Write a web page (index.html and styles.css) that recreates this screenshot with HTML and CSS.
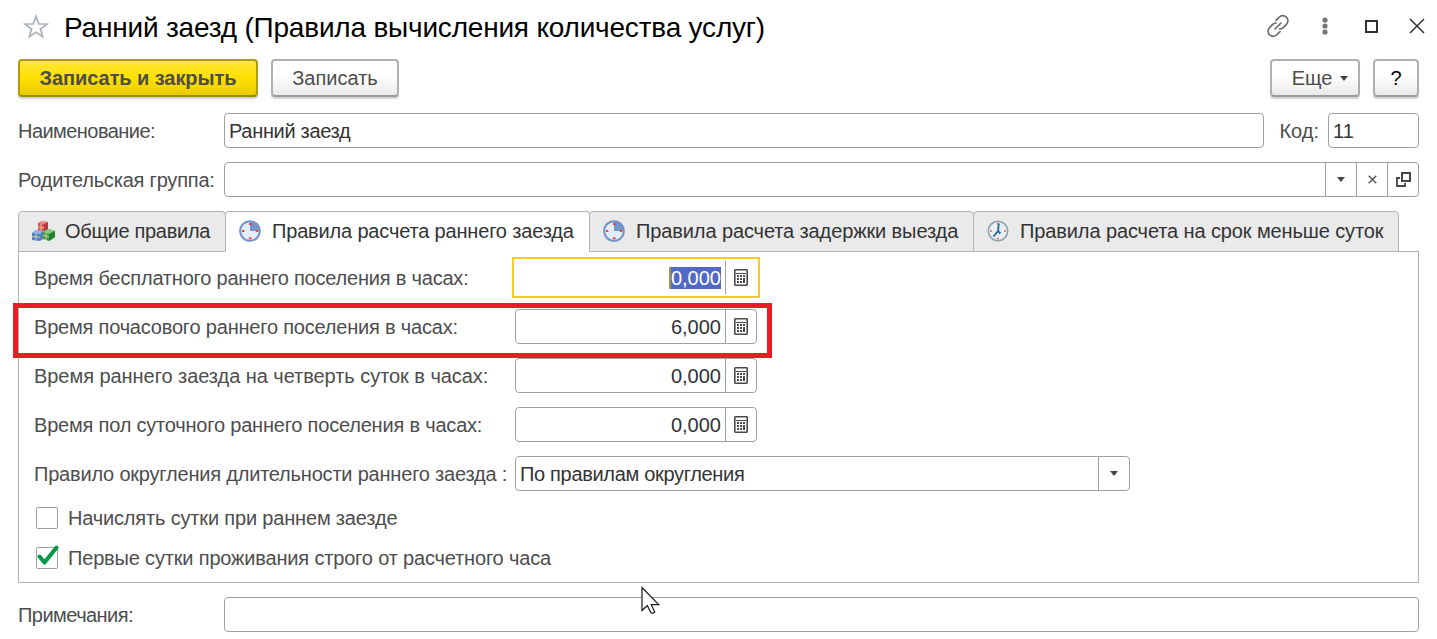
FILE: index.html
```html
<!DOCTYPE html>
<html lang="ru">
  <head>
    <meta charset="UTF-8" />
    <meta name="viewport" content="width=device-width, initial-scale=1.0" />
    <title>Ранний заезд (Правила вычисления количества услуг)</title>
    <link rel="stylesheet" href="styles.css">
  </head>
  <body>
    <!-- Shared icons -->
    <svg class="sprite" width="0" height="0">
      <symbol id="calc" viewBox="0 0 14 17">
        <rect x="0.8" y="0.8" width="12.4" height="15.4" rx="0.6" fill="#fff" stroke="#4a4a4c" stroke-width="1.6" />
        <path d="M2 4.5h10" stroke="#4a4a4c" />
        <path d="M3 7h8M3 10h5M3 13h5" stroke="#4a4a4c" stroke-width="2" stroke-dasharray="2 1" />
        <path d="M10 9v5" stroke="#4a4a4c" stroke-width="2" />
      </symbol>
      <symbol id="clock" viewBox="0 0 22 22">
        <circle cx="11" cy="11" r="9.8" fill="#e6edfa" stroke="#7493c8" stroke-width="2" />
        <path d="M11 11V1.5A9.5 9.5 0 0 1 20.5 11z" fill="#7493c8" />
        <path d="M10 4h2.4M10 18.2h2.4M3 11h2.4M16.8 11h2.4" stroke="#fa4028" stroke-width="2" />
      </symbol>
    </svg>

    <div class="title-bar">
      <svg class="star" width="26" height="25" viewBox="0 0 26 25">
        <path d="M13 2.4l2.8 7.5 8 .3-6.3 4.9 2.2 7.6-6.7-4.4-6.7 4.4 2.2-7.6-6.3-4.9 8-.3z" fill="none" stroke="#b0b5bb" stroke-width="1.8" />
      </svg>
      <h1>Ранний заезд (Правила вычисления количества услуг)</h1>
      <div class="window-icons">
        <svg width="24" height="24" viewBox="0 0 24 24" fill="none" stroke="#67676a" stroke-width="1.6" stroke-linecap="round">
          <path d="M10 6.4L13.2 3.2a5 5 0 0 1 7.2 0a5 5 0 0 1 0 7.2L17.3 13.6q-1.6 1.4-3.8 1.4" />
          <path d="M14 17.6L10.8 20.8a5 5 0 0 1-7.2 0a5 5 0 0 1 0-7.2L6.7 10.4q1.5-1.4 3.5-1.4" />
          <path d="M9 15L15 9" />
        </svg>
        <svg width="6" height="18" viewBox="0 0 6 18" fill="#757575">
          <circle cx="3" cy="3" r="2.6" /><circle cx="3" cy="9" r="2.6" /><circle cx="3" cy="15" r="2.6" />
        </svg>
        <svg width="13" height="13" viewBox="0 0 13 13">
          <rect x="1" y="1" width="11" height="11" fill="none" stroke="#303030" stroke-width="2" />
        </svg>
        <svg width="16" height="16" viewBox="0 0 16 16">
          <path d="M1 1l14 14M15 1L1 15" stroke="#333" stroke-width="1.5" />
        </svg>
      </div>
    </div>

    <div class="toolbar">
      <button class="btn btn-primary">Записать и закрыть</button>
      <button class="btn btn-save">Записать</button>
      <button class="btn btn-more">Еще <i class="arrow"></i></button>
      <button class="btn btn-help">?</button>
    </div>

    <div class="row">
      <span class="label narrow">Наименование:</span>
      <div class="field grow"><span class="value narrow">Ранний заезд</span></div>
      <span class="label-code">Код:</span>
      <div class="field code"><span class="value">11</span></div>
    </div>
    <div class="row">
      <span class="label tight">Родительская группа:</span>
      <div class="field grow">
        <span class="value"></span>
        <span class="cell"><i class="arrow"></i></span>
        <span class="cell">
          <svg width="9" height="9" viewBox="0 0 9 9"><path d="M.7.7l7.6 7.6M8.3.7L.7 8.3" stroke="#4f4f4f" stroke-width="1.3" /></svg>
        </span>
        <span class="cell">
          <svg width="15" height="15" viewBox="0 0 15 15" fill="none" stroke="#444" stroke-width="2"><path d="M6 1h8v8H6z" /><path d="M4 6H1v8h8v-3" stroke-width="1.8" /></svg>
        </span>
      </div>
    </div>

    <div class="tabs">
      <div class="tab tab-general">
        <svg width="24" height="22" viewBox="0 0 24 22">
          <path d="M7 3l4-2 6 1v8l-4 2-6-1z" fill="#d9545a" />
          <path d="M7 3l4-2 6 1-4 2z" fill="#ee9691" />
          <path d="M13 4l4-2v8l-4 2z" fill="#b83b43" />
          <path d="M12 12l5-3 7 2v6l-6 4-6-2z" fill="#3e9a43" />
          <path d="M12 12l5-3 7 2-6 3z" fill="#83cb7c" />
          <path d="M18 14l6-3v6l-6 4z" fill="#24822f" />
          <path d="M1 13l4-3 7 1v8l-3 2-8-1z" fill="#4f83bd" />
          <path d="M1 13l4-3 7 1-3 3z" fill="#91b8dc" />
          <path d="M5 13v7M1 16.5l8 .7M10 4v7M7 7l6 .8M15 13v7M12 15.5l6 1.2" stroke="#ead9a0" stroke-width="0.8" fill="none" />
        </svg>
        <span>Общие правила</span>
      </div>
      <div class="tab tab-early active">
        <svg width="22" height="22"><use href="#clock" /></svg>
        <span>Правила расчета раннего заезда</span>
      </div>
      <div class="tab tab-late">
        <svg width="22" height="22"><use href="#clock" /></svg>
        <span>Правила расчета задержки выезда</span>
      </div>
      <div class="tab tab-short">
        <svg width="22" height="22" viewBox="0 0 22 22">
          <circle cx="11" cy="11" r="9.7" fill="#e8f0f6" stroke="#8fa0ad" stroke-width="1.6" />
          <path d="M10 18.5h2M3 11h2M17 11h2M10 3.6h2" stroke="#f06050" stroke-width="1.6" />
          <path d="M11.8 3.5L11 11l-4.5 5.5M11 11l2.5 2.5" fill="none" stroke="#286b9c" stroke-width="1.9" />
        </svg>
        <span>Правила расчета на срок меньше суток</span>
      </div>
    </div>

    <div class="panel">
      <div class="panel-row">
        <span class="label tight">Время бесплатного раннего поселения в часах:</span>
        <div class="field number focused">
          <span class="value"><mark>0,000</mark></span>
          <span class="cell"><svg width="14" height="17"><use href="#calc" /></svg></span>
        </div>
      </div>
      <div class="panel-row marked">
        <span class="label tight">Время почасового раннего поселения в часах:</span>
        <div class="field number">
          <span class="value">6,000</span>
          <span class="cell"><svg width="14" height="17"><use href="#calc" /></svg></span>
        </div>
      </div>
      <div class="panel-row">
        <span class="label loose">Время раннего заезда на четверть суток в часах:</span>
        <div class="field number">
          <span class="value">0,000</span>
          <span class="cell"><svg width="14" height="17"><use href="#calc" /></svg></span>
        </div>
      </div>
      <div class="panel-row">
        <span class="label tight">Время пол суточного раннего поселения в часах:</span>
        <div class="field number">
          <span class="value">0,000</span>
          <span class="cell"><svg width="14" height="17"><use href="#calc" /></svg></span>
        </div>
      </div>
      <div class="panel-row">
        <span class="label tight">Правило округления длительности раннего заезда :</span>
        <div class="field select">
          <span class="value narrow">По правилам округления</span>
          <span class="cell"><i class="arrow"></i></span>
        </div>
      </div>
      <div class="check-row">
        <span class="checkbox"></span>
        <span class="check-label">Начислять сутки при раннем заезде</span>
      </div>
      <div class="check-row">
        <span class="checkbox">
          <svg class="tick" width="22" height="22" viewBox="0 0 22 22"><path d="M2.5 11.5l5 6L19.5 2.5" fill="none" stroke="#009a49" stroke-width="4" stroke-linecap="round" stroke-linejoin="round" /></svg>
        </span>
        <span class="check-label">Первые сутки проживания строго от расчетного часа</span>
      </div>
    </div>

    <div class="row notes">
      <span class="label narrow">Примечания:</span>
      <div class="field grow"><span class="value"></span></div>
    </div>

    <svg class="cursor" width="20" height="29" viewBox="0 0 20 29">
      <path d="M1 1.5v23l5.3-5 3.6 7.3q2 .9 3.8-.8l-3.4-7.3h7.4z" fill="#fff" stroke="#171722" stroke-width="1.2" />
    </svg>
  </body>
</html>
```

FILE: styles.css
```css
:root {
  --border: #a0a0a0;
  --tab-border: #b3b3b3;
  --label: #4d4d4d;
  --text: #333;
  --focus: #f9cb22;
}

*,
*::after {
  box-sizing: border-box;
}

body {
  position: relative;
  height: 639px;
  margin: 0;
  padding: 0 18px;
  overflow: hidden;
  background: #fff;
  color: var(--text);
  font-family: "Liberation Sans", Arial, sans-serif;
  font-size: 20px;
  line-height: 23px;
  white-space: nowrap;
}

svg {
  display: block;
  flex: none;
}

.sprite {
  position: absolute;
}

.title-bar {
  display: flex;
  align-items: center;
  height: 54px;
  padding-left: 5px;
}

.star {
  margin-bottom: 2px;
}

h1 {
  margin: 0 0 0 15px;
  padding-top: 2px;
  color: #000;
  font-size: 28px;
  font-weight: normal;
  line-height: 32px;
  letter-spacing: -0.2px;
}

.window-icons {
  display: flex;
  align-items: center;
  margin: 0 -6px 2px auto;
}

.window-icons svg:nth-child(2) {
  margin-left: 32px;
}

.window-icons svg:nth-child(3) {
  margin-left: 37px;
}

.window-icons svg:nth-child(4) {
  margin-left: 31px;
}

.toolbar {
  display: flex;
  margin-top: 5px;
}

.btn {
  display: flex;
  align-items: center;
  justify-content: center;
  height: 38px;
  padding: 0;
  border: 2px solid #b0b0b0;
  border-bottom-color: #9b9b9b;
  border-radius: 4px;
  background: linear-gradient(#fff 45%, #e9e9e9);
  box-shadow: 0 2px 1px #d2d2d2;
  color: var(--label);
  font: inherit;
}

.btn-primary {
  width: 240px;
  border-color: #b09c06;
  border-bottom-color: #9c8a00;
  background: linear-gradient(#ffe83c, #ffe000 50%, #e9cc00);
  font-weight: bold;
  letter-spacing: -0.08px;
}

.btn-save {
  width: 128px;
  margin-left: 13px;
}

.btn-more {
  width: 90px;
  margin-left: auto;
  padding-left: 10px;
  gap: 8px;
}

.btn-help {
  width: 46px;
  margin-left: 13px;
  color: #000;
}

.arrow {
  width: 0;
  height: 0;
  border: 4px solid transparent;
  border-top: 5px solid #444;
  border-bottom: 0;
}

.row {
  display: flex;
  align-items: center;
  height: 35px;
  margin-top: 14px;
}

.toolbar + .row {
  margin-top: 16px;
}

.label {
  flex: none;
  width: 206px;
  padding-top: 2px;
  color: var(--label);
}

.label.narrow {
  letter-spacing: -0.55px;
}

.value.narrow {
  letter-spacing: -0.32px;
}

.tight {
  letter-spacing: -0.2px;
}

.loose {
  letter-spacing: -0.05px;
}

.field {
  display: flex;
  height: 35px;
  border: 1px solid var(--border);
  border-radius: 4px;
  background: #fff;
}

.grow {
  flex: 1;
}

.value {
  flex: 1;
  padding: 6px 4px 4px;
}

.label-code {
  margin: 0 9px 0 15px;
  padding-top: 2px;
  color: var(--label);
}

.code {
  width: 91px;
}

.cell {
  display: flex;
  align-items: center;
  justify-content: center;
  width: 31px;
  padding-bottom: 1px;
  border-left: 1px solid var(--border);
}

/* Tabs overlap the top border of the panel by one pixel */
.tabs {
  display: flex;
  margin-top: 14px;
}

.tab {
  display: flex;
  align-items: center;
  height: 41px;
  margin-right: -1px;
  padding: 0 0 2px 12px;
  border: 1px solid var(--tab-border);
  border-radius: 4px 4px 0 0;
  background: #eaeaea;
}

.tab span {
  margin-left: 11px;
  padding-top: 2px;
  letter-spacing: -0.11px;
}

.tab-general {
  width: 208px;
}

.tab-general span {
  margin-left: 10px;
  letter-spacing: -0.3px;
}

.tab-early {
  width: 365px;
  padding-left: 13px;
}

.tab-early span {
  letter-spacing: -0.17px;
}

.tab-late {
  width: 385px;
  padding-left: 13px;
}

.tab-short {
  width: 426px;
  padding-left: 13px;
}

.active {
  z-index: 1;
  border-bottom-color: #fff;
  background: #fff;
}

.panel {
  height: 332px;
  margin-top: -1px;
  padding: 8px 15px 0;
  border: 1px solid var(--tab-border);
}

.panel-row {
  display: flex;
  align-items: center;
  height: 35px;
  margin-bottom: 14px;
}

.panel-row .label {
  width: 481px;
}

.number {
  width: 242px;
}

.number .value {
  text-align: right;
}

.focused {
  width: 248px;
  height: 41px;
  margin: -3px;
  padding: 2px 2px 2px 1px;
  border: 2px solid var(--focus);
  border-radius: 0;
}

mark {
  margin-left: -2px;
  border-left: 2px solid #a89140;
  background: #5069c4;
  color: #fff;
}

.select {
  width: 615px;
}

/* Red frame lies over the row and its neighbours */
.marked {
  position: relative;
}

.marked::after {
  content: "";
  position: absolute;
  top: -6px;
  left: -21px;
  width: 759px;
  height: 55px;
  border: 5px solid #ed1c24;
}

.check-row {
  display: flex;
  align-items: center;
  height: 23px;
  margin: 15px 0 0 2px;
}

.check-row + .check-row {
  margin-top: 17px;
}

.checkbox {
  position: relative;
  width: 22px;
  height: 22px;
  border: 1px solid var(--border);
  border-radius: 2px;
}

.tick {
  position: absolute;
  top: -3px;
  left: 0;
}

.check-label {
  margin-left: 10px;
  padding-top: 2px;
  color: var(--label);
  letter-spacing: -0.17px;
}

.cursor {
  position: absolute;
  top: 586px;
  left: 641px;
}
```
